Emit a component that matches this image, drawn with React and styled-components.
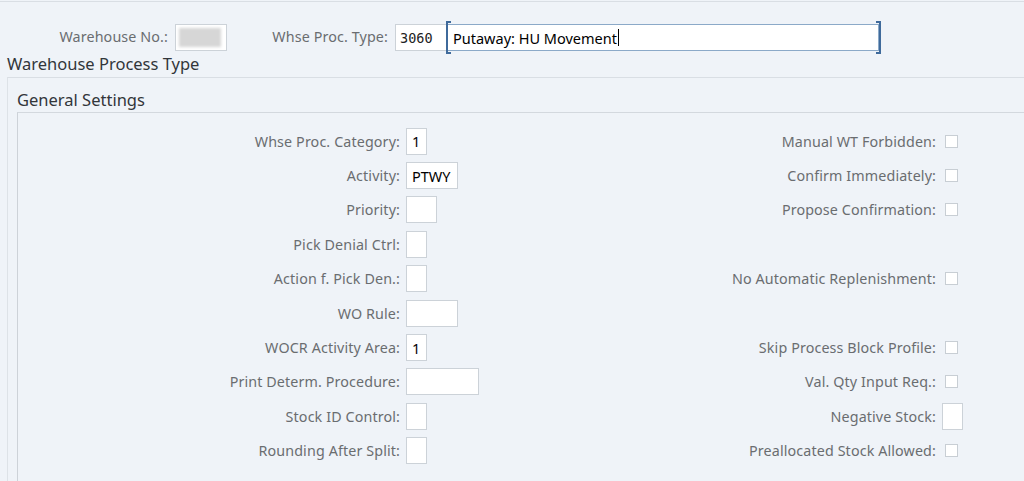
import React from 'react';
import styled, { createGlobalStyle } from 'styled-components';

const GlobalStyle = createGlobalStyle`
  html, body {
    margin: 0;
    padding: 0;
    background: #eff3f8;
    font-family: "Noto Sans", "Open Sans", Arial, sans-serif;
  }
`;

const Page = styled.div`
  width: 1024px;
  height: 481px;
  overflow: hidden;
  padding-top: 1px;
  box-sizing: border-box;
  background: #eff3f8;
`;

const TopRule = styled.div`
  height: 1px;
  background: #d9dee4;
`;

const Header = styled.div`
  display: flex;
  align-items: center;
  height: 27px;
  margin-top: 22px;
`;

const HeaderLabel = styled.label`
  width: ${(p) => p.width}px;
  text-align: right;
  padding-right: 7px;
  box-sizing: border-box;
  font-size: 14.3px;
  letter-spacing: 0.12px;
  line-height: 20px;
  margin-top: -2px;
  color: #6a6d70;
  white-space: nowrap;
`;

const Field = styled.div`
  position: relative;
  width: ${(p) => p.width}px;
  height: 27px;
  box-sizing: border-box;
  background: #fff;
  border: 1px solid ${(p) => (p.focused ? '#8ba9c8' : '#ccd2d8')};
  display: flex;
  align-items: center;
  padding-left: ${(p) => (p.mono ? 4 : 5)}px;
  font-family: ${(p) => (p.mono ? '"DejaVu Sans Mono", "Liberation Mono", monospace' : 'inherit')};
  font-size: ${(p) => (p.mono ? 13.5 : 14.5)}px;
  color: ${(p) => (p.mono ? '#222' : '#000')};
  white-space: nowrap;

  ${(p) =>
    p.focused &&
    `
    &::before, &::after {
      content: '';
      position: absolute;
      top: -4px;
      bottom: -4px;
      width: 3px;
      border-top: 2px solid #3f6a9b;
      border-bottom: 2px solid #3f6a9b;
    }
    &::before {
      left: -2px;
      border-left: 2px solid #3f6a9b;
    }
    &::after {
      right: -3px;
      border-right: 2px solid #3f6a9b;
    }
  `}
`;

const Blurred = styled.div`
  width: 42px;
  height: 19px;
  margin-left: -2px;
  background: #d6d6d6;
  filter: blur(1.5px);
`;

const Caret = styled.span`
  display: inline-block;
  width: 1px;
  height: 17px;
  background: #000;
  margin-left: 1px;
`;

const SectionTitle = styled.div`
  font-size: 16.5px;
  color: #32363a;
  line-height: 20px;
  padding-left: ${(p) => p.indent}px;
  margin-top: ${(p) => p.top}px;
  height: ${(p) => p.h}px;
  box-sizing: border-box;
  white-space: nowrap;
`;

const OuterBox = styled.div`
  margin-left: 7px;
  border-top: 1px solid #d9dee4;
  border-left: 1px solid #dde2e7;
  height: 500px;
`;

const InnerBox = styled.div`
  margin-left: 9px;
  border-top: 1px solid #d3d8de;
  border-left: 1px solid #cdd2d8;
  padding-top: 11px;
  height: 500px;
`;

const FormGrid = styled.div`
  display: grid;
  grid-template-columns: 382px 224px 300px 40px;
  grid-auto-rows: 34.4px;
  column-gap: 6px;
  align-items: center;
`;

const Label = styled.div`
  text-align: right;
  font-size: 14.3px;
  letter-spacing: 0.12px;
  color: #6a6d70;
  white-space: nowrap;
`;

const Cell = styled.div`
  display: flex;
  align-items: center;
`;

const Checkbox = styled.span`
  width: 13px;
  height: 13px;
  margin-left: 3px;
  box-sizing: border-box;
  background: #fff;
  border: 1px solid #c8ced4;
`;

const leftRows = [
  { label: 'Whse Proc. Category:', width: 21, value: '1' },
  { label: 'Activity:', width: 52, value: 'PTWY' },
  { label: 'Priority:', width: 31 },
  { label: 'Pick Denial Ctrl:', width: 21 },
  { label: 'Action f. Pick Den.:', width: 21 },
  { label: 'WO Rule:', width: 52 },
  { label: 'WOCR Activity Area:', width: 21, value: '1' },
  { label: 'Print Determ. Procedure:', width: 73 },
  { label: 'Stock ID Control:', width: 21 },
  { label: 'Rounding After Split:', width: 21 },
];

const rightRows = [
  { label: 'Manual WT Forbidden:' },
  { label: 'Confirm Immediately:' },
  { label: 'Propose Confirmation:' },
  null,
  { label: 'No Automatic Replenishment:' },
  null,
  { label: 'Skip Process Block Profile:' },
  { label: 'Val. Qty Input Req.:' },
  { label: 'Negative Stock:', input: 21 },
  { label: 'Preallocated Stock Allowed:' },
];

export default function App() {
  return (
    <Page>
      <GlobalStyle />
      <TopRule />
      <Header>
        <HeaderLabel width={175}>Warehouse No.:</HeaderLabel>
        <Field width={52}>
          <Blurred />
        </Field>
        <HeaderLabel width={168}>Whse Proc. Type:</HeaderLabel>
        <Field width={52} mono>3060</Field>
        <Field width={432} focused>
          Putaway: HU Movement<Caret />
        </Field>
      </Header>
      <SectionTitle indent={7} top={3} h={23}>Warehouse Process Type</SectionTitle>
      <OuterBox>
        <SectionTitle indent={9} top={12} h={22}>General Settings</SectionTitle>
        <InnerBox>
          <FormGrid>
            {leftRows.map((row, i) => {
              const right = rightRows[i];
              return (
                <React.Fragment key={i}>
                  <Label>{row.label}</Label>
                  <Cell>
                    <Field width={row.width}>{row.value}</Field>
                  </Cell>
                  <Label>{right ? right.label : ''}</Label>
                  <Cell>
                    {right &&
                      (right.input ? <Field width={right.input} /> : <Checkbox />)}
                  </Cell>
                </React.Fragment>
              );
            })}
          </FormGrid>
        </InnerBox>
      </OuterBox>
    </Page>
  );
}
